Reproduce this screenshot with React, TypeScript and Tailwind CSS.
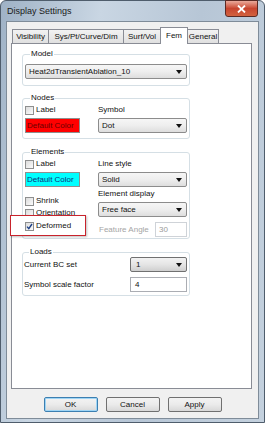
import React from "react";

function Check({ checked = false }: { checked?: boolean }) {
  return (
    <span className="w-[9px] h-[9px] border border-[#8e8f8f] bg-gradient-to-br from-[#dcdcdc] to-[#fbfbfb] flex items-center justify-center shrink-0">
      {checked && (
        <svg width="7" height="7" viewBox="0 0 7 7">
          <path d="M1 3.6 L2.8 5.6 L6 1" stroke="#1c3f86" strokeWidth="1.4" fill="none" />
        </svg>
      )}
    </span>
  );
}

function CheckRow({ label, checked }: { label: string; checked?: boolean }) {
  return (
    <div className="h-[10px] flex items-center gap-[2px]">
      <Check checked={checked} />
      <span className="leading-[10px]">{label}</span>
    </div>
  );
}

function Combo({ text, className = "" }: { text: string; className?: string }) {
  return (
    <div
      className={`h-[15px] border border-[#8c8c8c] rounded-[2px] bg-gradient-to-b from-[#f6f6f6] via-[#eeeeee] to-[#dedede] flex items-center justify-between pl-[3px] pr-[4px] ${className}`}
    >
      <span>{text}</span>
      <svg width="6" height="4" viewBox="0 0 6 4">
        <path d="M0 0 H6 L3 4 Z" fill="#111" />
      </svg>
    </div>
  );
}

function Group({ title, children, className = "" }: { title: string; children: React.ReactNode; className?: string }) {
  return (
    <fieldset className={`w-[168px] border border-[#d5dfe5] rounded-[3px] ${className}`}>
      <legend className="ml-[5px] px-[1px] leading-[10px]">{title}</legend>
      {children}
    </fieldset>
  );
}

function Tab({ label, w, active }: { label: string; w: string; active?: boolean }) {
  if (active)
    return (
      <div className={`${w} h-[17px] -ml-px bg-white border border-b-0 border-[#898c95] flex items-center justify-center pb-[1px] relative z-10`}>
        {label}
      </div>
    );
  return (
    <div className={`${w} h-[14px] mb-[1px] -ml-px first:ml-0 bg-gradient-to-b from-[#f2f2f2] to-[#e0e0e0] border border-b-0 border-[#898c95] flex items-center justify-center`}>
      {label}
    </div>
  );
}

function Button({ label, primary }: { label: string; primary?: boolean }) {
  return (
    <div
      className={`w-[54px] h-[15px] rounded-[2px] border flex items-center justify-center bg-gradient-to-b from-[#f3f3f3] via-[#ebebeb] to-[#d8d8d8] ${
        primary ? "border-[#3c7fb1] shadow-[inset_0_0_0_1px_#9fd5f5]" : "border-[#707070]"
      }`}
    >
      {label}
    </div>
  );
}

export default function App() {
  return (
    <div className="w-[265px] h-[423px] flex flex-col rounded-t-[6px] border border-[#4f5d6c] bg-[linear-gradient(100deg,#9fb2c6_0%,#c9d6e3_30%,#b7c6d6_60%,#c4d1de_100%)] font-['Liberation_Sans',Arial,sans-serif] text-[8px] text-[#111]">
      {/* title bar */}
      <div className="h-[20px] flex justify-between pl-[6px] pr-[6px] shrink-0">
        <span className="text-[9px] text-[#1a1a1a] mt-[5px] leading-[10px]">Display Settings</span>
        <div className="w-[33px] h-[17px] -mt-px rounded-b-[3px] border border-[#5b2a24] bg-gradient-to-b from-[#e9a99b] via-[#c8452f] to-[#d2623f] flex items-center justify-center">
          <svg width="9" height="8" viewBox="0 0 9 8">
            <path d="M1 0.5 L8 7.5 M8 0.5 L1 7.5" stroke="#fff" strokeWidth="1.8" />
          </svg>
        </div>
      </div>

      {/* client area */}
      <div className="flex-1 mx-[5px] mb-[3px] bg-[#f0f0f0] border border-[#7f8c99] flex flex-col">
        <div className="flex items-end h-[22px] pl-[5px] shrink-0">
          <Tab label="Visibility" w="w-[37px]" />
          <Tab label="Sys/Pt/Curve/Dim" w="w-[76px]" />
          <Tab label="Surf/Vol" w="w-[38px]" />
          <Tab label="Fem" w="w-[28px]" active />
          <Tab label="General" w="w-[32px]" />
        </div>

        <div className="-mt-px ml-[4px] mr-[6px] h-[346px] bg-white border border-[#898c95] pl-[10px] pt-[5px]">
          <Group title="Model" className="px-[2px] pt-[5px] pb-[6px]">
            <Combo text="Heat2dTransientAblation_10" />
          </Group>

          <Group title="Nodes" className="mt-[7px] px-[2px] pt-[2px] pb-[5px]">
            <div className="flex gap-[18px]">
              <div className="w-[55px]">
                <CheckRow label="Label" />
                <div className="mt-[3px] h-[15px] border border-[#8f8f8f] bg-[#ff0000] text-[#6a0000] flex items-center pl-[1px]">
                  Default Color
                </div>
              </div>
              <div className="w-[89px]">
                <div className="h-[10px] leading-[10px]">Symbol</div>
                <Combo text="Dot" className="mt-[3px]" />
              </div>
            </div>
          </Group>

          <Group title="Elements" className="mt-[8px] px-[2px] pt-[2px] pb-[1px]">
            <div className="flex gap-[18px]">
              <div className="w-[55px]">
                <CheckRow label="Label" />
                <div className="mt-[3px] h-[15px] border border-[#8f8f8f] bg-[#00ffff] text-[#10307a] flex items-center pl-[1px]">
                  Default Color
                </div>
                <div className="mt-[9px]">
                  <CheckRow label="Shrink" />
                </div>
                <div className="mt-[2px]">
                  <CheckRow label="Orientation" />
                </div>
                <div className="mt-[3px] relative">
                  <div className="absolute -left-[15px] -top-[6px] w-[76px] h-[21px] border-[1.5px] border-[#c8232c] bg-white shadow-[1px_1px_2px_rgba(0,0,0,0.25)]" />
                  <div className="relative">
                    <CheckRow label="Deformed" checked />
                  </div>
                </div>
              </div>
              <div className="w-[89px]">
                <div className="h-[10px] leading-[10px]">Line style</div>
                <Combo text="Solid" className="mt-[3px]" />
                <div className="mt-[2px] h-[10px] leading-[10px]">Element display</div>
                <Combo text="Free face" className="mt-[3px]" />
                <div className="mt-[5px] flex items-center justify-between">
                  <span className="text-[#a5a5a5] pl-[1px]">Feature Angle</span>
                  <div className="w-[32px] h-[15px] border border-[#cfd3d8] bg-white text-[#9a9a9a] flex items-center pl-[3px]">30</div>
                </div>
              </div>
            </div>
          </Group>

          <Group title="Loads" className="mt-[8px] pl-[1px] pr-[2px] pb-[3px]">
            <div className="flex items-center h-[15px]">
              <span className="w-[106px]">Current BC set</span>
              <div className="w-[57px] h-[15px] rounded-[2px] border border-[#707070] bg-gradient-to-b from-[#f2f2f2] via-[#e5e5e5] to-[#cfcfcf] flex items-center justify-between pl-[5px] pr-[4px]">
                <span>1</span>
                <svg width="6" height="4" viewBox="0 0 6 4">
                  <path d="M0 0 H6 L3 4 Z" fill="#111" />
                </svg>
              </div>
            </div>
            <div className="mt-[5px] flex items-center h-[15px]">
              <span className="w-[106px]">Symbol scale factor</span>
              <div className="w-[57px] h-[15px] border border-[#abadb3] bg-white flex items-center pl-[4px]">4</div>
            </div>
          </Group>
        </div>

        <div className="flex justify-center gap-[8px] mt-[8px]">
          <Button label="OK" primary />
          <Button label="Cancel" />
          <Button label="Apply" />
        </div>
      </div>
    </div>
  );
}
